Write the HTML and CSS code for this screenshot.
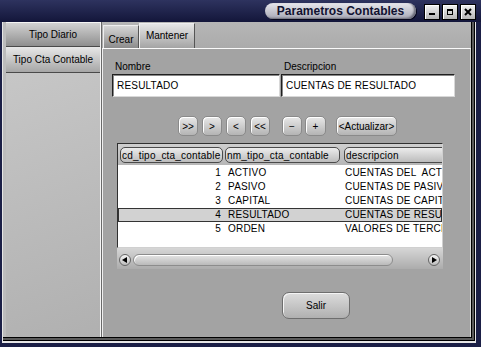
FILE: index.html
```html
<!DOCTYPE html>
<html lang="es">
<head>
    <meta charset="UTF-8">
    <title>Parametros Contables</title>
    <link rel="stylesheet" href="styles.css">
</head>
<body>
    <div class="titlebar">
        <div class="title">Parametros Contables</div>
        <div class="wbtns">
            <span class="wbtn"><svg width="10" height="10" viewBox="0 0 10 10"><rect x="2" y="6" width="6" height="2" fill="#000"/></svg></span>
            <span class="wbtn"><svg width="10" height="10" viewBox="0 0 10 10"><rect x="2.5" y="2.5" width="5" height="5" fill="none" stroke="#000"/><rect x="2" y="2" width="6" height="2" fill="#000"/></svg></span>
            <span class="wbtn"><svg width="10" height="10" viewBox="0 0 10 10"><path d="M2 2 L8 8 M8 2 L2 8" stroke="#000" stroke-width="2"/></svg></span>
        </div>
    </div>

    <div class="frame">
        <div class="frame-in">
            <div class="content">
                <div class="sidebar">
                    <div class="vtab">Tipo Diario</div>
                    <div class="vtab active">Tipo Cta Contable</div>
                </div>

                <div class="main">
                    <div class="tabs">
                        <div class="tab">Crear</div>
                        <div class="tab active">Mantener</div>
                    </div>

                    <div class="panel">
                        <div class="fields">
                            <div class="field nombre">
                                <span class="label">Nombre</span>
                                <div class="input">RESULTADO</div>
                            </div>
                            <div class="field descripcion">
                                <span class="label">Descripcion</span>
                                <div class="input">CUENTAS DE RESULTADO</div>
                            </div>
                        </div>

                        <div class="nav">
                            <button class="btn">&gt;&gt;</button>
                            <button class="btn">&gt;</button>
                            <button class="btn">&lt;</button>
                            <button class="btn">&lt;&lt;</button>
                            <button class="btn sep">&minus;</button>
                            <button class="btn wide1">+</button>
                            <button class="btn act">&lt;Actualizar&gt;</button>
                        </div>

                        <div class="grid">
                            <div class="grid-head">
                                <div class="hcell c1"><span>cd_tipo_cta_contable</span></div>
                                <div class="hcell c2"><span>nm_tipo_cta_contable</span></div>
                                <div class="hcell c3"><span>descripcion</span></div>
                            </div>
                            <div class="grid-body">
                                <div class="row"><span class="num">1</span><span class="txt">ACTIVO</span><span class="txt">CUENTAS DEL  ACTIVO</span></div>
                                <div class="row"><span class="num">2</span><span class="txt">PASIVO</span><span class="txt">CUENTAS DE PASIVO</span></div>
                                <div class="row"><span class="num">3</span><span class="txt">CAPITAL</span><span class="txt">CUENTAS DE CAPITAL</span></div>
                                <div class="row selected"><span class="num">4</span><span class="txt">RESULTADO</span><span class="txt">CUENTAS DE RESULTADO</span></div>
                                <div class="row"><span class="num">5</span><span class="txt">ORDEN</span><span class="txt">VALORES DE TERCEROS</span></div>
                            </div>
                        </div>
                        <div class="hscroll">
                            <span class="arrow"><svg width="12" height="12" viewBox="0 0 12 12"><path d="M3 6 L8 3 L8 9 Z" fill="#000"/></svg></span>
                            <span class="thumb"></span>
                            <span class="arrow right"><svg width="12" height="12" viewBox="0 0 12 12"><path d="M9 6 L4 3 L4 9 Z" fill="#000"/></svg></span>
                        </div>

                        <div class="actions">
                            <button class="salir">Salir</button>
                        </div>
                    </div>
                </div>
            </div>
        </div>
    </div>
</body>
</html>
```

FILE: styles.css
```css
body {
    margin: 0;
    width: 481px;
    height: 347px;
    overflow: hidden;
    background: #1b1f46;
    font-family: 'Liberation Sans', Arial, sans-serif;
    font-size: 10px;
    color: #000;
}
.titlebar {
    height: 22px;
    display: flex;
    justify-content: flex-end;
    align-items: flex-start;
    padding-right: 5px;
    background: linear-gradient(#2e335f, #13163a);
}
.title {
    margin-top: 3px;
    width: 151px;
    height: 16px;
    line-height: 16px;
    border-radius: 8px;
    background: linear-gradient(#e6e6ec, #a8a9b6);
    box-shadow: 1px 1px 0 #05061a, inset -2px -1px 2px #6a6b78;
    font-weight: bold;
    font-size: 12px;
    text-align: center;
    color: #111130;
}
.wbtns {
    display: flex;
    gap: 2px;
    margin-left: 8px;
    margin-top: 4px;
}
.wbtn {
    width: 16px;
    height: 16px;
    box-sizing: border-box;
    border: 1px solid #000;
    background: linear-gradient(#f2f2f2, #b6b6b6);
    box-shadow: inset 1px 1px 0 #fff;
    display: flex;
    align-items: center;
    justify-content: center;
}
.frame {
    margin-left: 2px;
    width: 474px;
    height: 321px;
    box-sizing: border-box;
    border-left: 1px solid #e6e6e6;
    border-right: 1px solid #e6e6e6;
    border-bottom: 2px solid #e6e6e6;
}
.frame-in {
    height: 100%;
    box-sizing: border-box;
    background: #5a5a5a;
    border-right: 1px solid #000;
    border-bottom: 1px solid #000;
    padding: 0 2px 2px 0;
}
.content {
    height: 100%;
    box-sizing: border-box;
    display: flex;
    border-right: 1px solid #000;
    border-bottom: 1px solid #000;
    background: #bcbcbc;
    padding-left: 3px;
}
.sidebar {
    width: 95px;
    box-sizing: border-box;
    border-top: 1px solid #f4f4f4;
    border-right: 1px solid #f4f4f4;
    background: linear-gradient(160deg, #cacaca, #b0b0b0);
}
.vtab {
    height: 24px;
    line-height: 23px;
    box-sizing: border-box;
    text-align: center;
    background: linear-gradient(#d2d2d2, #8f8f8f);
    border-bottom: 1px solid #4a4a4a;
}
.vtab.active {
    height: 26px;
    line-height: 25px;
    background: linear-gradient(#e8e8e8, #a6a6a6);
}
.main {
    flex: 1;
    display: flex;
    flex-direction: column;
    border-left: 1px solid #6a6a6a;
}
.tabs {
    height: 26px;
    display: flex;
    align-items: flex-end;
    padding-left: 1px;
    background: linear-gradient(#b6b6b6, #ababab);
}
.tab {
    width: 36px;
    height: 23px;
    line-height: 23px;
    box-sizing: border-box;
    text-align: center;
    padding-top: 2px;
    background: linear-gradient(#d6d6d6, #8c8c8c);
    border-top: 1px solid #eeeeee;
    border-left: 1px solid #eeeeee;
    border-right: 1px solid #555;
}
.tab.active {
    width: 56px;
    height: 25px;
    line-height: 20px;
    background: linear-gradient(#e6e6e6, #a4a4a4);
}
.panel {
    flex: 1;
    background: #a3a3a3;
    border-top: 1px solid #fafafa;
    border-left: 1px solid #efefef;
    border-right: 1px solid #d8d8d8;
    padding: 12px 0 0 9px;
}
.fields {
    display: flex;
    gap: 1px;
}
.field {
    display: flex;
    flex-direction: column;
}
.label {
    height: 13px;
    padding-left: 3px;
}
.nombre .input {
    width: 168px;
}
.descripcion .input {
    width: 174px;
}
.input {
    height: 23px;
    line-height: 21px;
    box-sizing: border-box;
    padding-left: 4px;
    background: #fff;
    border: 1px solid;
    border-color: #202020 #d8d8d8 #d8d8d8 #202020;
    box-shadow: inset 1px 1px 0 #888;
    letter-spacing: 0.2px;
}
.nav {
    display: flex;
    gap: 4px;
    margin: 19px 0 0 66px;
}
.btn {
    width: 20px;
    height: 20px;
    padding: 0;
    font-family: inherit;
    font-size: 10px;
    color: #000;
    border: 1px solid #8a8a8a;
    border-radius: 5px;
    background: linear-gradient(#e8e8e8, #b4b4b4);
    box-shadow: inset 1px 1px 0 #fff;
}
.btn.sep {
    margin-left: 8px;
}
.btn.wide1 {
    width: 21px;
    margin-left: -1px;
}
.btn.act {
    width: 61px;
    margin-left: 6px;
}
.grid {
    width: 326px;
    margin: 7px 0 0 5px;
    box-sizing: border-box;
    border: 1px solid;
    border-color: #303030 #d0d0d0 #d0d0d0 #303030;
    background: #fff;
}
.grid-head {
    height: 21px;
    display: grid;
    grid-template-columns: 107px 117px 100px;
    background: linear-gradient(#cfcfcf, #b6b6b6);
    overflow: hidden;
}
.hcell {
    padding: 3px 2px 2px 2px;
    overflow: hidden;
}
.hcell span {
    display: block;
    height: 16px;
    line-height: 15px;
    box-sizing: border-box;
    padding-left: 1px;
    border: 1px solid #4a4a4a;
    border-radius: 5px;
    background: linear-gradient(#ececec, #bcbcbc);
    letter-spacing: 0.2px;
    white-space: nowrap;
}
.hcell.c2 {
    padding-left: 0;
}
.hcell.c3 {
    padding-right: 0;
}
.hcell.c3 span {
    width: 120px;
}
.grid-body {
    height: 82px;
    padding-top: 1px;
    box-sizing: border-box;
}
.row {
    height: 14px;
    line-height: 14px;
    display: grid;
    grid-template-columns: 107px 117px 100px;
    letter-spacing: 0.2px;
    white-space: pre;
}
.row span {
    overflow: hidden;
}
.num {
    text-align: right;
    padding-right: 4px;
}
.txt {
    padding-left: 3px;
}
.row.selected {
    background: #d2d2d2;
    box-shadow: inset 0 0 0 1px #333;
}
.hscroll {
    width: 326px;
    height: 21px;
    margin-left: 5px;
    box-sizing: border-box;
    display: flex;
    align-items: flex-start;
    padding: 6px 3px 0 2px;
    background: linear-gradient(#d6d6d6, #acacac);
}
.arrow {
    width: 12px;
    height: 12px;
    box-sizing: border-box;
    border: 1px solid #666;
    border-radius: 50%;
    background: linear-gradient(#f4f4f4, #bcbcbc);
    display: flex;
}
.arrow svg {
    margin: -1px;
}
.thumb {
    width: 260px;
    height: 12px;
    margin-left: 2px;
    box-sizing: border-box;
    border: 1px solid #8c8c8c;
    border-radius: 6px;
    background: linear-gradient(#e4e4e4, #bababa);
    box-shadow: inset 1px 1px 0 #fff;
}
.arrow.right {
    margin-left: auto;
}
.actions {
    margin: 23px 0 0 170px;
}
.salir {
    width: 68px;
    height: 27px;
    font-family: inherit;
    font-size: 10px;
    color: #000;
    border: 1px solid #6e6e6e;
    border-radius: 7px;
    background: linear-gradient(#dcdcdc, #b0b0b0);
    box-shadow: inset 1px 1px 0 #f4f4f4;
}
```
